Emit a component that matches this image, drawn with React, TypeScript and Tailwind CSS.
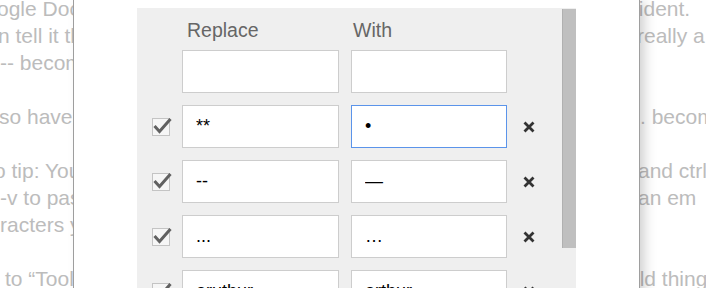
import React from 'react';

interface BgLine {
  left: string;
  leftClass: string;
  right: string;
  rightClass: string;
}

interface Rule {
  from: string;
  to: string;
  focused?: boolean;
}

// text of the document behind the dialog; only the edges show
const bgLines: BgLine[] = [
  { left: 'ogle Docs will never be quite', leftClass: 'ml-[-3px]', right: 'fident.', rightClass: 'ml-[3px]' },
  { left: 'n tell it that you want to', leftClass: 'ml-[-2px]', right: 'really a', rightClass: 'ml-[7px]' },
  { left: '-- becomes an em dash', leftClass: 'ml-[0px]', right: '', rightClass: '' },
  { left: '', leftClass: '', right: '', rightClass: '' },
  { left: 'so have it replace', leftClass: 'ml-[-1px]', right: '. becomes', rightClass: 'ml-[10px]' },
  { left: '', leftClass: '', right: '', rightClass: '' },
  { left: 'o tip: You can use', leftClass: 'ml-[-6px]', right: 'and ctrl-', rightClass: 'ml-[8px]' },
  { left: '-v to paste', leftClass: 'ml-[0px]', right: 'an em', rightClass: 'ml-[8px]' },
  { left: 'racters you need', leftClass: 'ml-[0px]', right: '', rightClass: '' },
  { left: '', leftClass: '', right: '', rightClass: '' },
  { left: 'to “Tools”', leftClass: 'ml-[5px]', right: 'old things', rightClass: 'ml-[-2px]' },
];

const rules: Rule[] = [
  { from: '**', to: '•', focused: true },
  { from: '--', to: '—' },
  { from: '...', to: '…' },
  { from: 'aruthur', to: 'arthur' },
];

function CheckBox() {
  return (
    <div className="relative w-[18px] h-[18px] shrink-0 border border-[#c4c4c4] bg-[#f6f6f6]">
      <svg className="absolute left-[-1px] top-[-1px] overflow-visible" width="20" height="20" viewBox="0 0 20 20">
        <path d="M2.5 8 L7.5 13.5 L18.5 1" fill="none" stroke="#616161" strokeWidth="3" />
      </svg>
    </div>
  );
}

function RemoveIcon() {
  return (
    <svg width="12" height="12" viewBox="0 0 12 12" className="shrink-0">
      <path d="M1.5 1.5 L10.5 10.5 M10.5 1.5 L1.5 10.5" stroke="#333" strokeWidth="2.8" />
    </svg>
  );
}

function Field({ value, w, focused }: { value: string; w: string; focused?: boolean }) {
  return (
    <input
      readOnly
      value={value}
      className={`${w} h-[43px] shrink-0 bg-white border ${
        focused ? 'border-[#5b94ea]' : 'border-[#cdcdcd]'
      } pl-[13px] text-[18px] text-black outline-none`}
    />
  );
}

export default function App() {
  return (
    <div className="relative w-[706px] h-[288px] overflow-hidden bg-white font-['Liberation_Sans',Arial,sans-serif]">
      {/* document underneath */}
      <div className="mt-[-5px] text-[21px] leading-[27px] text-[#bcbcbc]">
        {bgLines.map((line, i) => (
          <div key={i} className="flex h-[27px] whitespace-nowrap">
            <div className="w-[630px] shrink-0 overflow-hidden">
              <span className={`inline-block ${line.leftClass}`}>{line.left}</span>
            </div>
            <span className={`inline-block ${line.rightClass}`}>{line.right}</span>
          </div>
        ))}
      </div>

      {/* substitutions dialog */}
      <div className="absolute left-[73px] top-0 z-10 w-[567px] h-[320px] bg-white border-x border-[#9e9e9e] shadow-[6px_0_12px_-2px_rgba(0,0,0,0.2)]">
        <div className="mt-[8px] ml-[63px] w-[439px] h-[320px] bg-[#efefef] flex">
          <div className="w-[425px]">
            <div className="h-[42px] pt-[11px] pl-[45px] flex text-[19.5px] leading-[22px] text-[#666]">
              <span className="w-[169px] pl-[5px]">Replace</span>
              <span className="pl-[2px]">With</span>
            </div>

            <div className="flex items-center h-[43px] mb-[12px] pl-[45px]">
              <Field value="" w="w-[157px]" />
              <div className="w-[12px]" />
              <Field value="" w="w-[156px]" />
            </div>

            {rules.map((rule, i) => (
              <div key={i} className="flex items-center h-[43px] mb-[12px] pl-[15px]">
                <CheckBox />
                <div className="w-[12px]" />
                <Field value={rule.from} w="w-[157px]" />
                <div className="w-[12px]" />
                <Field value={rule.to} w="w-[156px]" focused={rule.focused} />
                <div className="w-[16px]" />
                <RemoveIcon />
              </div>
            ))}
          </div>

          {/* scrollbar */}
          <div className="w-[14px] pt-[1px]">
            <div className="h-[239px] bg-[#bfbfbf] border-l border-[#b0b0b0]" />
          </div>
        </div>
      </div>
    </div>
  );
}
